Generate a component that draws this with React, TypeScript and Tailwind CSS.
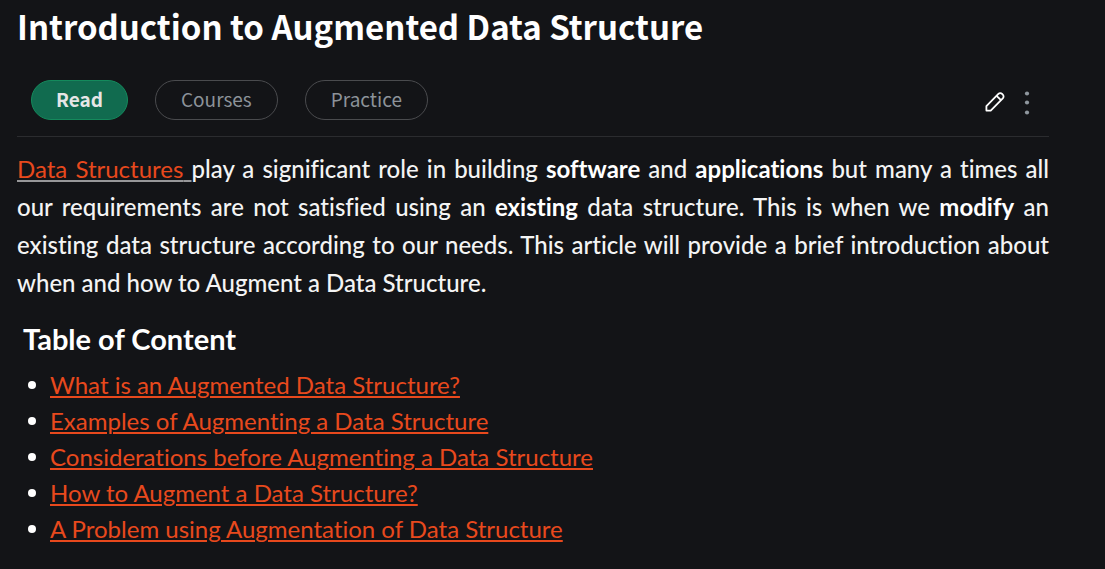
const tabs = ["Read", "Courses", "Practice"];

const contents = [
  "What is an Augmented Data Structure?",
  "Examples of Augmenting a Data Structure",
  "Considerations before Augmenting a Data Structure",
  "How to Augment a Data Structure?",
  "A Problem using Augmentation of Data Structure",
];

function PencilIcon() {
  return (
    <svg viewBox="0 0 22 22" className="size-[22px]" fill="none" stroke="#fff" strokeWidth="1.8" strokeLinejoin="round" aria-hidden="true">
      <path d="M2.4 19.6V15.2L14.4 2.9a2.6 2.6 0 0 1 3.7 0l.7.7a2.6 2.6 0 0 1 0 3.7L6.7 19.6Z" />
      <path d="M12.6 4.8l4.4 4.4" />
    </svg>
  );
}

function DotsIcon() {
  return (
    <svg viewBox="0 0 6 24" className="h-6 w-[6px]" fill="#8f979e" aria-hidden="true">
      <circle cx="3" cy="2.5" r="2.1" />
      <circle cx="3" cy="11.5" r="2.1" />
      <circle cx="3" cy="21.5" r="2.1" />
    </svg>
  );
}

export default function App() {
  return (
    <main className="min-h-screen bg-[#131417] pr-14 pl-[17px] font-['Lato',sans-serif] text-white [font-variant-ligatures:none]">
      <h1 className="font-['Noto_Sans_CJK_SC',sans-serif] text-[33px] leading-[52px] font-bold">
        Introduction to Augmented Data Structure
      </h1>

      <div className="mt-7 flex items-center justify-between border-b border-[#2b2c2f] pr-[19px] pb-4 pl-[14px]">
        <nav className="flex gap-[27px] font-['Noto_Sans_CJK_SC',sans-serif] text-[19px]">
          {tabs.map((tab, i) => (
            <button
              key={tab}
              type="button"
              className={
                i === 0
                  ? "h-10 rounded-full border border-[#148a5c] bg-[#116b4f] px-6 pb-[2px] font-bold text-[#e6e6e6]"
                  : "h-10 rounded-full border border-[#4a4b4e] px-[25px] pb-[2px] text-[#8c9299]"
              }
            >
              {tab}
            </button>
          ))}
        </nav>
        <div className="flex items-center gap-[18px] pt-1">
          <button type="button" aria-label="Edit">
            <PencilIcon />
          </button>
          <button type="button" aria-label="More options" className="pt-[2px]">
            <DotsIcon />
          </button>
        </div>
      </div>

      <p className="mt-[13px] text-justify text-[24px] leading-[38px] font-medium text-[#f4f4f4]">
        <a
          href="#data-structures"
          className="font-normal text-[#e8491d] underline decoration-[#979799] decoration-2 underline-offset-2"
        >
          Data Structures{" "}
        </a>
        play a significant role in building <strong className="font-bold text-white">software</strong> and{" "}
        <strong className="font-bold text-white">applications</strong> but many a times all our requirements are not
        satisfied using an <strong className="font-bold text-white">existing</strong> data structure. This is when we{" "}
        <strong className="font-bold text-white">modify</strong> an existing data structure according to our needs. This
        article will provide a brief introduction about when and how to Augment a Data Structure.
      </p>

      <h2 className="mt-[17px] pl-[6px] text-[29px] leading-[40px] font-bold">Table of Content</h2>

      <ul className="mt-2 pb-5 text-[24px] leading-9">
        {contents.map((item) => (
          <li key={item} className="flex items-center gap-[14px] pl-[11px]">
            <span className="size-2 shrink-0 rounded-full bg-white" />
            <a
              href={"#" + item.toLowerCase().replace(/\W+/g, "-")}
              className="text-[#e8491d] underline decoration-2 underline-offset-2"
            >
              {item}
            </a>
          </li>
        ))}
      </ul>
    </main>
  );
}
